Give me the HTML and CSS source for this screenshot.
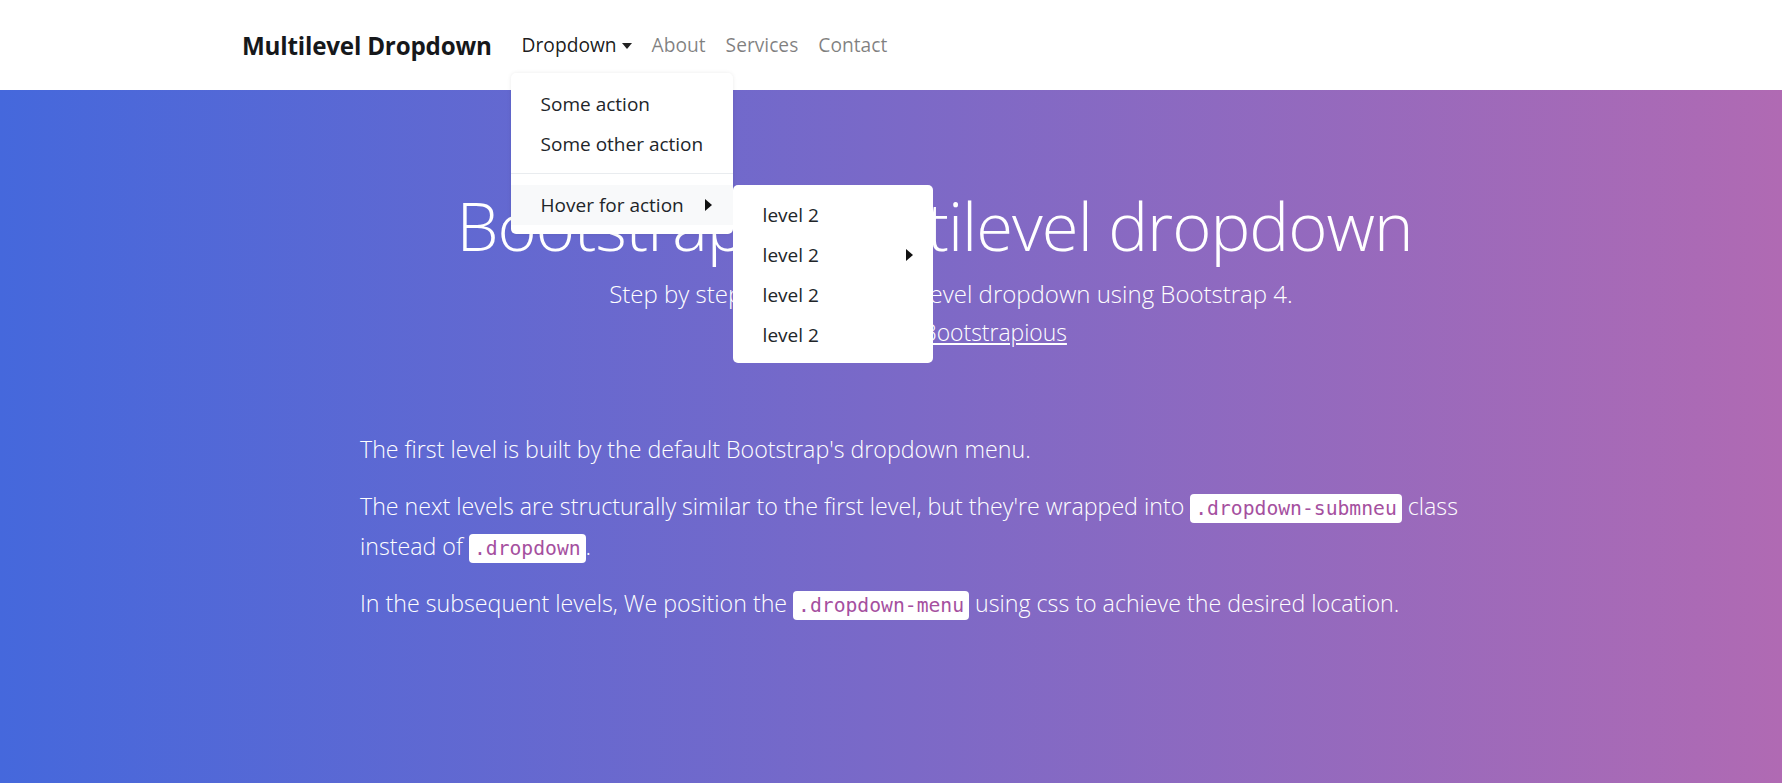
FILE: index.html
```html
<!DOCTYPE html>
<html lang="en">
<head>
<meta charset="utf-8">
<title>Multilevel Dropdown</title>
<link rel="stylesheet" href="styles.css">
</head>
<body>
<header class="navbar">
  <div class="nav-inner">
    <a class="brand" href="#">Multilevel Dropdown</a>
    <ul class="nav">
      <li class="nav-item dropdown">
        <a class="nav-link active" href="#">Dropdown<span class="caret"></span></a>
        <ul class="menu">
          <li><a class="menu-item" href="#">Some action</a></li>
          <li><a class="menu-item" href="#">Some other action</a></li>
          <li class="divider"></li>
          <li class="submenu">
            <a class="menu-item hover" href="#">Hover for action<span class="arrow"></span></a>
            <ul class="menu menu-sub">
              <li><a class="menu-item" href="#">level 2</a></li>
              <li><a class="menu-item" href="#">level 2<span class="arrow"></span></a></li>
              <li><a class="menu-item" href="#">level 2</a></li>
              <li><a class="menu-item" href="#">level 2</a></li>
            </ul>
          </li>
        </ul>
      </li>
      <li class="nav-item"><a class="nav-link" href="#">About</a></li>
      <li class="nav-item"><a class="nav-link" href="#">Services</a></li>
      <li class="nav-item"><a class="nav-link" href="#">Contact</a></li>
    </ul>
  </div>
</header>
<main class="hero">
  <div class="hero-head">
    <h1 class="title">Bootstrap 4 multilevel dropdown</h1>
    <p class="lead lead-main">Step by step to create a multilevel dropdown using Bootstrap 4.</p>
    <p class="lead">Snippet by <a href="#" class="lead-link">Bootstrapious</a></p>
  </div>
  <div class="content">
    <p>The first level is built by the default Bootstrap's dropdown menu.</p>
    <p>The next levels are structurally similar to the first level, but they're wrapped into <code>.dropdown-submneu</code> class instead of <code>.dropdown</code>.</p>
    <p>In the subsequent levels, We position the <code>.dropdown-menu</code> using css to achieve the desired location.</p>
  </div>
</main>
</body>
</html>
```
FILE: styles.css
```css
* { box-sizing: border-box; }
html, body { margin: 0; padding: 0; }
body {
  font-family: "Open Sans", "Noto Sans", sans-serif;
  color: #212529;
  min-height: 783px;
  display: flex;
  flex-direction: column;
}
a { text-decoration: none; color: inherit; }
ul { list-style: none; margin: 0; padding: 0; }

.navbar {
  height: 90px;
  background: #fff;
  position: relative;
  z-index: 10;
}
.nav-inner {
  height: 100%;
  display: flex;
  align-items: center;
  padding-left: 242px;
}
.brand {
  font-family: "Open Sans", sans-serif;
  font-weight: 700;
  font-size: 24.2px;
  color: #16181b;
  margin-right: 20px;
  letter-spacing: -0.2px;
}
.nav { display: flex; align-items: center; }
.nav-item { position: relative; }
.nav-link {
  display: flex;
  align-items: center;
  padding: 8px 10px;
  font-size: 19.2px;
  line-height: 30px;
  color: rgba(0,0,0,.5);
}
.nav-link.active { color: rgba(0,0,0,.9); }
.caret {
  display: inline-block;
  width: 0; height: 0;
  margin-left: 5px;
  border-top: 6px solid #222;
  border-left: 5px solid transparent;
  border-right: 5px solid transparent;
  margin-top: 2px;
}

.menu {
  position: absolute;
  top: calc(100% + 5px);
  left: -1px;
  width: 222px;
  background: #fff;
  border-radius: 5px;
  padding: 11px 0 9px;
  box-shadow: 0 0 4px rgba(0,0,0,.08);
}
.menu-item {
  height: 40px;
  display: flex;
  align-items: center;
  justify-content: space-between;
  padding: 0 21px 0 30px;
  font-size: 19px;
  color: #212529;
  white-space: nowrap;
}
.menu-item.hover { background: #f8f9fa; }
.divider {
  height: 1px;
  margin: 9px 0 11px;
  background: #e9ecef;
}
.submenu { position: relative; }
.menu-sub {
  top: 0;
  left: 100%;
  width: 200px;
  padding: 10px 0 8px;
  box-shadow: none;
}
.menu-sub .menu-item { padding-right: 20px; }
.arrow {
  display: inline-block;
  width: 0; height: 0;
  border-left: 7px solid #111;
  border-top: 6px solid transparent;
  border-bottom: 6px solid transparent;
}

.hero {
  flex: 1;
  background: linear-gradient(to right, #4568dc, #b06ab3);
  color: #fff;
  padding-bottom: 40px;
}
.hero-head {
  text-align: center;
  padding: 90px 0 0 87px;
}
.title {
  margin: 0;
  font-weight: 300;
  font-size: 67px;
  line-height: 90px;
  letter-spacing: -1px;
}
.lead {
  margin: 0;
  font-weight: 300;
  font-size: 24px;
  line-height: 38px;
}
.lead-main {
  margin-top: 5px;
  padding-left: 33px;
}
.lead-link { text-decoration: underline; font-size: 22.9px; }
.content {
  width: 1110px;
  padding: 77px 0 0 0;
  margin-left: 360px;
}
.content p {
  margin: 0 0 17px;
  font-weight: 300;
  font-size: 23.2px;
  line-height: 40px;
}
code {
  font-family: "DejaVu Sans Mono", "Liberation Mono", monospace;
  font-size: 19.7px;
  line-height: 1;
  background: #fff;
  color: #a5509f;
  border-radius: 4px;
  padding: 3px 5px;
}
```
